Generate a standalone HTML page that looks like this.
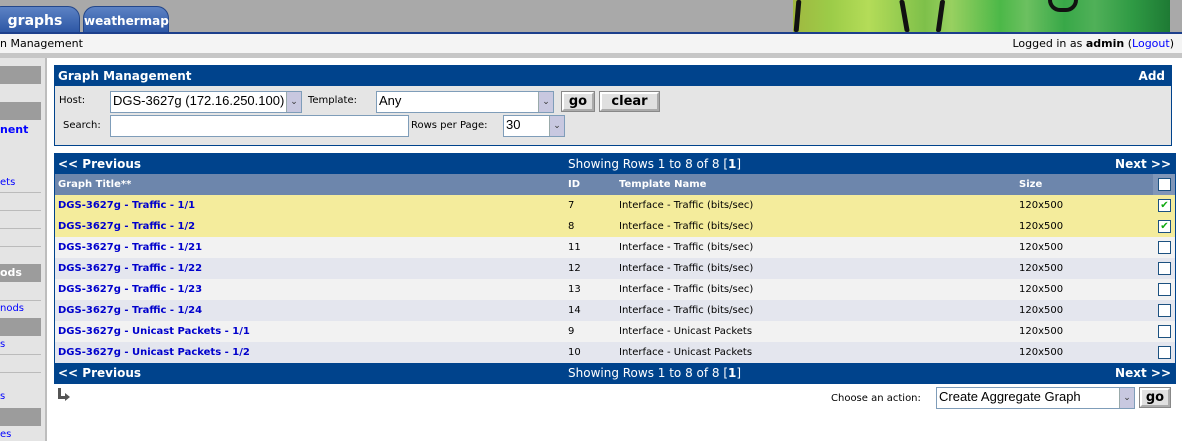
<!DOCTYPE html>
<html><head><style>
*{margin:0;padding:0;box-sizing:border-box}
body{width:1182px;height:441px;overflow:hidden;background:#fff;font-family:Verdana,"DejaVu Sans",sans-serif;font-size:10px;position:relative}
.abs{position:absolute}
#top{left:0;top:0;width:1182px;height:32px;background:#a9a9a9}
#line{left:0;top:32px;width:1182px;height:2px;background:#1c3f8c}
.tab{top:6px;height:26px;background:linear-gradient(#5c82c4,#2d57a5);border-radius:12px 12px 0 0;color:#fff;font-weight:bold;font-size:14px;text-align:center;line-height:28px;border:1px solid #24478a;border-bottom:none}
#cactus{left:793px;top:0;width:377px;height:32px;background:linear-gradient(90deg,#a0b840 0%,#9ccc48 10%,#b4dc58 20%,#7ec04a 35%,#98d060 42%,#4cb848 55%,#6cc060 62%,#38a848 72%,#50b058 80%,#2f9a44 90%,#1e7a34 100%)}
.stroke{background:#111;top:0;height:32px;width:5px;border-radius:2px}
#crumb{left:0;top:34px;width:1182px;height:19px;background:#f4f4f4;font-size:11px;line-height:19px}
#sep{left:0;top:53px;width:1182px;height:5px;background:#c6c6c6}
#side{left:0;top:58px;width:47px;height:383px;background:#e4e4e4;border-right:2px solid #bdbdbd}
.sbar{left:0;width:41px;height:18px;background:#9c9c9c;color:#fff;font-weight:bold;font-size:11px;line-height:18px}
.sl{left:0;font-size:10px;color:#00f}
.shr{left:0;width:41px;height:1px;background:#bbb}
#gm{left:54px;top:65px;width:1118px;height:81px;border:1px solid #00438c;background:#e5e5e5}
.hdr{background:#00438c;color:#fff;font-weight:bold;font-size:12px}
.inp{background:#fff;border:1px solid #7f9db9;font-family:"Liberation Sans",sans-serif;font-size:13px;line-height:18px;padding-left:2px}
.dd{position:absolute;right:0;top:0;width:15px;height:100%;background:#c8c8e0;border-left:1px solid #9aa;font-size:9px;text-align:center;line-height:18px;color:#333}
.btn{background:#e0e0e0;border:2px outset #fff;outline:1px solid #888;font-weight:bold;font-size:13px;text-align:center;line-height:16px}
#tbl{left:54px;top:153px;width:1122px;height:231px;border:1px solid #00438c;background:#fff}
.row{left:0;width:1120px;height:21px;font-size:10px;line-height:21px}
.row span{position:absolute}
.t{left:3px;color:#00c;font-weight:bold}
.i{left:513px}.tn{left:564px}.sz{left:964px}
.cb{left:1103px;top:4px;width:13px;height:13px;border:1px solid #1c5180;background:#fff;color:#1a1;font-weight:bold;font-size:10px;line-height:11px;text-align:center}
</style></head><body>
<div id="top" class="abs"></div>
<div class="abs tab" style="left:-10px;width:90px">graphs</div>
<div class="abs tab" style="left:83px;width:86px;font-size:12px">weathermap</div>
<div id="cactus" class="abs"></div>
<div class="abs stroke" style="left:795px;transform:skewX(-5deg)"></div>
<div class="abs stroke" style="left:902px;transform:skewX(10deg)"></div>
<div class="abs stroke" style="left:938px;transform:skewX(-8deg)"></div>
<div class="abs stroke" style="left:1048px;top:0;height:12px;width:30px;background:none;border:4px solid #111;border-top:none;border-radius:0 0 14px 14px"></div>
<div id="line" class="abs"></div>
<div id="crumb" class="abs"><span style="position:absolute;left:0">n Management</span><span style="position:absolute;right:8px">Logged in as <b>admin</b> (<span style="color:#00f">Logout</span>)</span></div>
<div id="sep" class="abs"></div>
<div id="side" class="abs"></div>
<div class="abs sbar" style="top:66px"></div>
<div class="abs sbar" style="top:102px"></div>
<div class="abs sl" style="top:123px;font-weight:bold;font-size:11px">nent</div>
<div class="abs sl" style="top:177px">ets</div>
<div class="abs shr" style="top:192px"></div>
<div class="abs shr" style="top:210px"></div>
<div class="abs shr" style="top:228px"></div>
<div class="abs shr" style="top:246px"></div>
<div class="abs sbar" style="top:264px">ods</div>
<div class="abs shr" style="top:300px"></div>
<div class="abs sl" style="top:303px">nods</div>
<div class="abs sbar" style="top:318px"></div>
<div class="abs sl" style="top:339px">s</div>
<div class="abs shr" style="top:354px"></div>
<div class="abs shr" style="top:372px"></div>
<div class="abs sl" style="top:391px">s</div>
<div class="abs sbar" style="top:408px"></div>
<div class="abs sl" style="top:429px">es</div>

<div id="gm" class="abs">
 <div class="hdr" style="height:20px;line-height:20px;padding-left:3px;position:relative">Graph Management<span style="position:absolute;right:6px">Add</span></div>
 <div class="abs" style="left:4px;top:29px">Host:</div>
 <div class="abs inp" style="left:55px;top:25px;width:192px;height:22px">DGS-3627g (172.16.250.100)<div class="dd">&#8964;</div></div>
 <div class="abs" style="left:253px;top:29px">Template:</div>
 <div class="abs inp" style="left:321px;top:25px;width:178px;height:22px">Any<div class="dd">&#8964;</div></div>
 <div class="abs btn" style="left:507px;top:26px;width:32px;height:19px">go</div>
 <div class="abs btn" style="left:545px;top:26px;width:59px;height:19px">clear</div>
 <div class="abs" style="left:8px;top:54px">Search:</div>
 <div class="abs inp" style="left:55px;top:49px;width:299px;height:22px"></div>
 <div class="abs" style="left:356px;top:54px">Rows per Page:</div>
 <div class="abs inp" style="left:448px;top:49px;width:62px;height:22px">30<div class="dd">&#8964;</div></div>
</div>

<div id="tbl" class="abs">
 <div class="abs hdr row" style="top:0;height:20px;line-height:21px;font-size:12px"><span style="left:3px">&lt;&lt; Previous</span><span style="left:513px;font-weight:normal">Showing Rows 1 to 8 of 8 [<b>1</b>]</span><span style="right:4px">Next &gt;&gt;</span></div>
 <div class="abs row" style="top:20px;background:#6d86ac;color:#fff;font-weight:bold"><span style="left:3px">Graph Title**</span><span class="i">ID</span><span class="tn">Template Name</span><span class="sz">Size</span><span style="left:1098px;width:22px;height:21px;background:#8096b8"></span><span class="cb"></span></div>
 <div class="abs row" style="top:41px;background:#f4ec9c"><span class="t">DGS-3627g - Traffic - 1/1</span><span class="i">7</span><span class="tn">Interface - Traffic (bits/sec)</span><span class="sz">120x500</span><span class="cb">&#10004;</span></div>
 <div class="abs row" style="top:62px;background:#f4ec9c"><span class="t">DGS-3627g - Traffic - 1/2</span><span class="i">8</span><span class="tn">Interface - Traffic (bits/sec)</span><span class="sz">120x500</span><span class="cb">&#10004;</span></div>
 <div class="abs row" style="top:83px;background:#f2f2f2"><span class="t">DGS-3627g - Traffic - 1/21</span><span class="i">11</span><span class="tn">Interface - Traffic (bits/sec)</span><span class="sz">120x500</span><span class="cb"></span></div>
 <div class="abs row" style="top:104px;background:#e4e6ee"><span class="t">DGS-3627g - Traffic - 1/22</span><span class="i">12</span><span class="tn">Interface - Traffic (bits/sec)</span><span class="sz">120x500</span><span class="cb"></span></div>
 <div class="abs row" style="top:125px;background:#f2f2f2"><span class="t">DGS-3627g - Traffic - 1/23</span><span class="i">13</span><span class="tn">Interface - Traffic (bits/sec)</span><span class="sz">120x500</span><span class="cb"></span></div>
 <div class="abs row" style="top:146px;background:#e4e6ee"><span class="t">DGS-3627g - Traffic - 1/24</span><span class="i">14</span><span class="tn">Interface - Traffic (bits/sec)</span><span class="sz">120x500</span><span class="cb"></span></div>
 <div class="abs row" style="top:167px;background:#f2f2f2"><span class="t">DGS-3627g - Unicast Packets - 1/1</span><span class="i">9</span><span class="tn">Interface - Unicast Packets</span><span class="sz">120x500</span><span class="cb"></span></div>
 <div class="abs row" style="top:188px;background:#e4e6ee"><span class="t">DGS-3627g - Unicast Packets - 1/2</span><span class="i">10</span><span class="tn">Interface - Unicast Packets</span><span class="sz">120x500</span><span class="cb"></span></div>
 <div class="abs hdr row" style="top:209px;height:20px;line-height:21px;font-size:12px"><span style="left:3px">&lt;&lt; Previous</span><span style="left:513px;font-weight:normal">Showing Rows 1 to 8 of 8 [<b>1</b>]</span><span style="right:4px">Next &gt;&gt;</span></div>
</div>
<div class="abs" style="left:58px;top:388px;width:3px;height:11px;background:#555"></div>
<div class="abs" style="left:58px;top:396px;width:8px;height:3px;background:#555"></div>
<div class="abs" style="left:65px;top:393px;width:0;height:0;border-left:5px solid #555;border-top:4px solid transparent;border-bottom:4px solid transparent"></div>
<div class="abs" style="left:831px;top:393px">Choose an action:</div>
<div class="abs inp" style="left:936px;top:387px;width:199px;height:22px">Create Aggregate Graph<div class="dd">&#8964;</div></div>
<div class="abs btn" style="left:1140px;top:388px;width:30px;height:19px">go</div>
</body></html>
